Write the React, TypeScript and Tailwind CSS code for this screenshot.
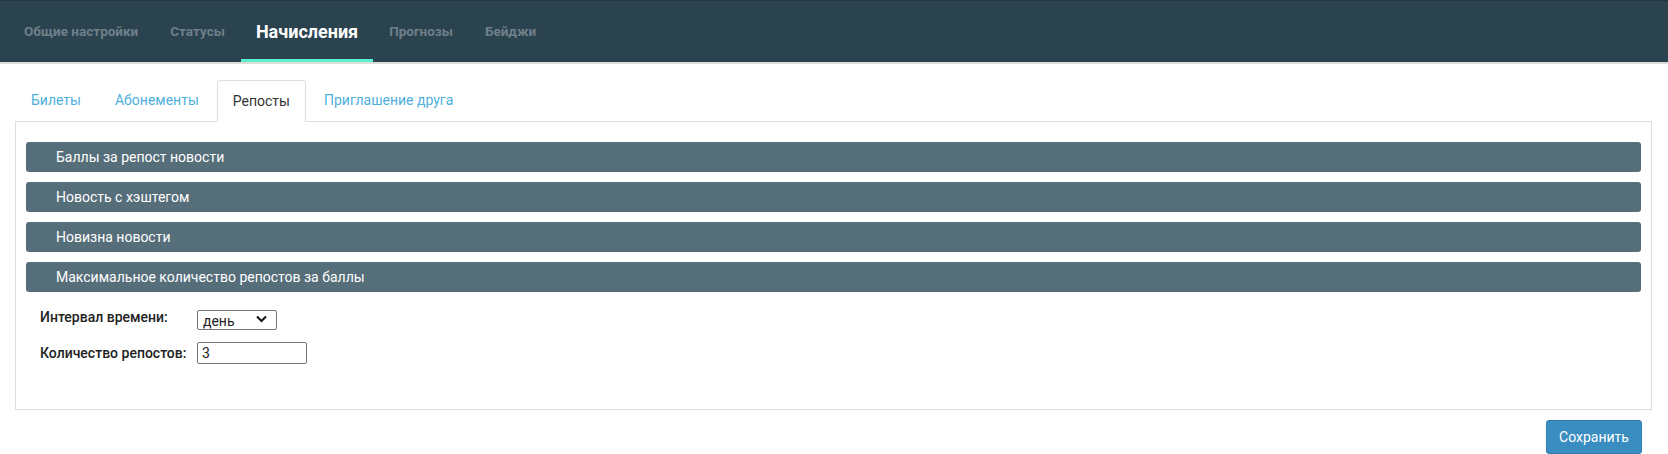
import React, { useState } from 'react'

const topTabs = ['Общие настройки', 'Статусы', 'Начисления', 'Прогнозы', 'Бейджи']
const subTabs = ['Билеты', 'Абонементы', 'Репосты', 'Приглашение друга']
const sections = [
  'Баллы за репост новости',
  'Новость с хэштегом',
  'Новизна новости',
  'Максимальное количество репостов за баллы',
]

export default function App() {
  const [activeTop, setActiveTop] = useState('Начисления')
  const [activeSub, setActiveSub] = useState('Репосты')
  const [interval, setInterval] = useState('день')
  const [count, setCount] = useState('3')

  return (
    <div className="min-h-[454px] bg-white font-['Roboto','Liberation_Sans',sans-serif] text-[#333]">
      {/* Top navigation */}
      <div className="h-[64px] bg-[#2b424f] border-t border-t-[#213741] border-b-2 border-b-[#dcdcdc] flex items-stretch pl-[8px]">
        {topTabs.map((t) => {
          const active = t === activeTop
          return (
            <button
              key={t}
              onClick={() => setActiveTop(t)}
              className={
                active
                  ? 'relative px-[15px] text-[18px] font-bold text-white'
                  : 'relative px-[16px] text-[13.5px] font-bold text-[#6f8089]'
              }
            >
              {t}
              {active && <span className="absolute left-0 right-0 bottom-0 h-[3px] bg-[#5cf0cf]" />}
            </button>
          )
        })}
      </div>

      <div className="pl-[15px] pr-[16px]">
        {/* Sub tabs */}
        <div className="flex items-end mt-[15px] h-[42px]">
          {subTabs.map((t) => {
            const active = t === activeSub
            return (
              <button
                key={t}
                onClick={() => setActiveSub(t)}
                className={
                  active
                    ? 'h-[42px] px-[15px] mr-[2px] text-[14px] text-[#333] bg-white border border-[#ddd] border-b-white rounded-t-[4px] -mb-px relative z-10'
                    : 'h-[42px] px-[15px] mr-[2px] text-[14px] text-[#4fb0dc] border border-transparent'
                }
              >
                {t}
              </button>
            )
          })}
        </div>

        {/* Content */}
        <div className="border border-[#ddd] pt-[20px] px-[10px] pb-[45px]">
          <div className="flex flex-col gap-[10px]">
            {sections.map((s) => (
              <div
                key={s}
                className="h-[30px] rounded-[3px] bg-[#566e7a] text-white text-[14px] flex items-center pl-[30px]"
              >
                {s}
              </div>
            ))}
          </div>

          <div className="mt-[17px] pl-[14px] flex flex-col gap-[13px]">
            <div className="flex items-center">
              <label className="w-[157px] text-[14px] font-medium text-[#222] -mt-[3px]">Интервал времени:</label>
              <div className="relative w-[80px] h-[20px]">
                <select
                  value={interval}
                  onChange={(e) => setInterval(e.target.value)}
                  className="appearance-none w-full h-full border border-[#767676] rounded-[2px] bg-white text-[14px] text-[#222] pl-[5px] outline-none"
                >
                  <option value="день">день</option>
                  <option value="неделя">неделя</option>
                  <option value="месяц">месяц</option>
                </select>
                <svg
                  className="pointer-events-none absolute right-[10px] top-[6px]"
                  width="11"
                  height="8"
                  viewBox="0 0 11 8"
                >
                  <path d="M1 1.5 L5.5 6 L10 1.5" fill="none" stroke="#111" strokeWidth="2" />
                </svg>
              </div>
            </div>
            <div className="flex items-center">
              <label className="w-[157px] text-[14px] font-medium text-[#222]">Количество репостов:</label>
              <input
                value={count}
                onChange={(e) => setCount(e.target.value)}
                className="w-[110px] h-[22px] border border-[#767676] rounded-[2px] text-[14px] text-[#222] pl-[4px] outline-none"
              />
            </div>
          </div>
        </div>

        <div className="flex justify-end pr-[10px] mt-[10px]">
          <button className="w-[96px] h-[34px] rounded-[3px] bg-[#3a8dc0] border border-[#2f7fb0] text-white text-[14px]">
            Сохранить
          </button>
        </div>
      </div>
    </div>
  )
}
